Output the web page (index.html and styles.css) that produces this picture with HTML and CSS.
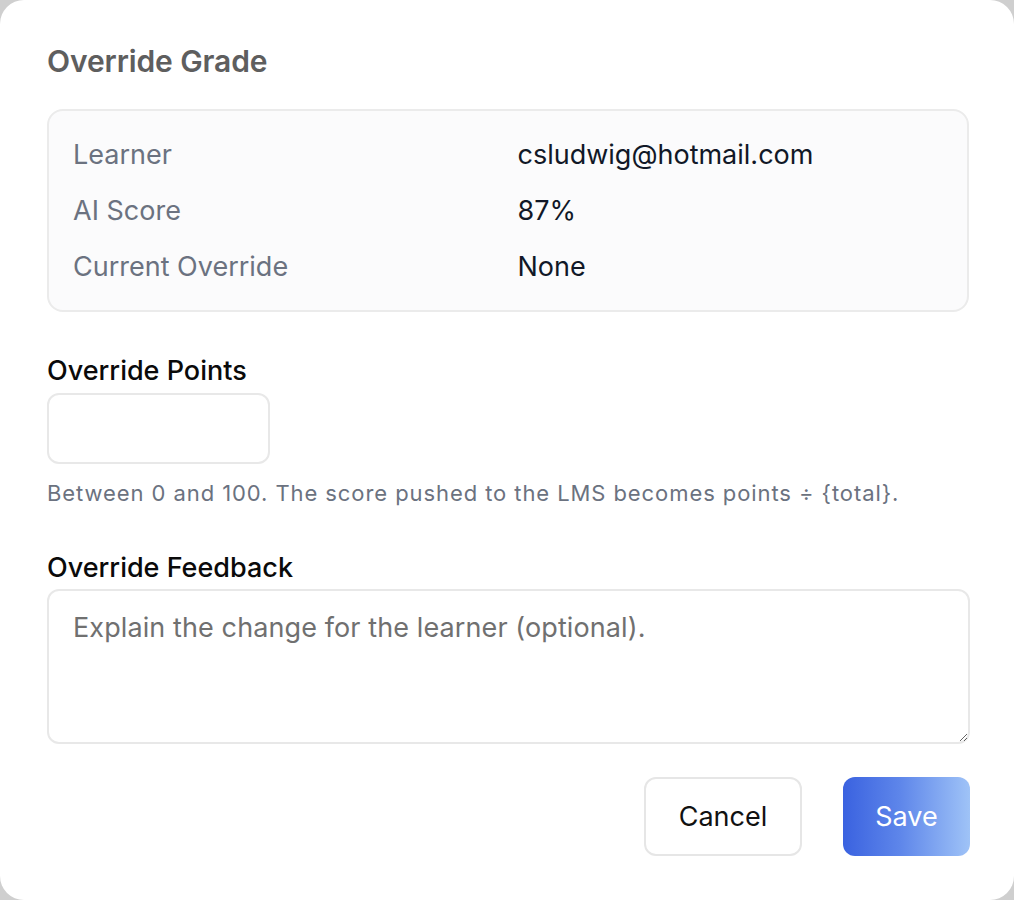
FILE: index.html
```html
<!DOCTYPE html>
<html lang="en">
<head>
<meta charset="utf-8">
<title>Override Grade</title>
<link rel="stylesheet" href="styles.css">
</head>
<body>
<div class="dialog">
  <h2 class="title">Override Grade</h2>
  <div class="summary">
    <div class="s-label">Learner</div>
    <div class="s-value">csludwig@hotmail.com</div>
    <div class="s-label">AI Score</div>
    <div class="s-value">87%</div>
    <div class="s-label">Current Override</div>
    <div class="s-value">None</div>
  </div>
  <label class="field-label label-points" for="points">Override Points</label>
  <input id="points" class="points-input" type="text">
  <p class="help">Between 0 and 100. The score pushed to the LMS becomes points ÷ {total}.</p>
  <label class="field-label label-feedback" for="feedback">Override Feedback</label>
  <textarea id="feedback" class="feedback" placeholder="Explain the change for the learner (optional)."></textarea>
  <div class="actions">
    <button class="btn btn-cancel" type="button">Cancel</button>
    <button class="btn btn-save" type="button">Save</button>
  </div>
</div>
</body>
</html>
```

FILE: styles.css
```css
html, body {
  margin: 0;
  padding: 0;
  background: #cfcfcf;
}
body {
  font-family: Inter, "Noto Sans", sans-serif;
}
.dialog {
  box-sizing: border-box;
  width: 1014px;
  height: 900px;
  background: #ffffff;
  border-radius: 24px;
  padding: 43px 45px 0 47px;
  display: flex;
  flex-direction: column;
}
.title {
  margin: 0;
  font-size: 30px;
  line-height: 36px;
  font-weight: 600;
  color: #5e5e5e;
  letter-spacing: -0.1px;
}
.summary {
  margin-top: 30px;
  border: 2px solid #ebebeb;
  border-radius: 16px;
  background: #fbfbfc;
  padding: 24px 24px 23px;
  display: grid;
  grid-template-columns: 1fr 1fr;
  column-gap: 19px;
  row-gap: 16px;
  font-size: 27px;
  line-height: 40px;
}
.s-label {
  color: #6b7280;
}
.s-value {
  color: #111827;
}
.field-label {
  display: block;
  font-size: 27px;
  line-height: 36px;
  font-weight: 500;
  color: #0a0a0a;
}
.label-points {
  margin-top: 41px;
}
.points-input {
  box-sizing: border-box;
  margin-top: 4px;
  width: 223px;
  height: 71px;
  border: 2px solid #e8e8e8;
  border-radius: 12px;
  background: #fff;
  outline: none;
  font: inherit;
}
.help {
  margin: 14px 0 0;
  font-size: 22px;
  line-height: 30px;
  color: #6b7280;
  letter-spacing: 0.92px;
}
.label-feedback {
  margin-top: 42px;
}
.feedback {
  box-sizing: border-box;
  display: block;
  margin-top: 3px;
  width: 923px;
  height: 155px;
  border: 2px solid #e8e8e8;
  border-radius: 12px;
  padding: 19px 24px;
  font-family: Inter, "Noto Sans", sans-serif;
  font-size: 27px;
  line-height: 36px;
  letter-spacing: 0.1px;
  color: #111827;
  resize: vertical;
  outline: none;
}
.feedback::placeholder {
  color: #707070;
}
.actions {
  margin-top: 33px;
  width: 923px;
  display: flex;
  justify-content: flex-end;
  gap: 41px;
}
.btn {
  box-sizing: border-box;
  height: 79px;
  border-radius: 12px;
  font-family: Inter, "Noto Sans", sans-serif;
  font-size: 27px;
  cursor: pointer;
}
.btn-cancel {
  width: 158px;
  background: #ffffff;
  border: 2px solid #e6e6e6;
  color: #111111;
}
.btn-save {
  width: 127px;
  border: none;
  color: #ffffff;
  background: linear-gradient(90deg, #3a62e0 0%, #5e86ea 45%, #9fc3f7 100%);
}
```
